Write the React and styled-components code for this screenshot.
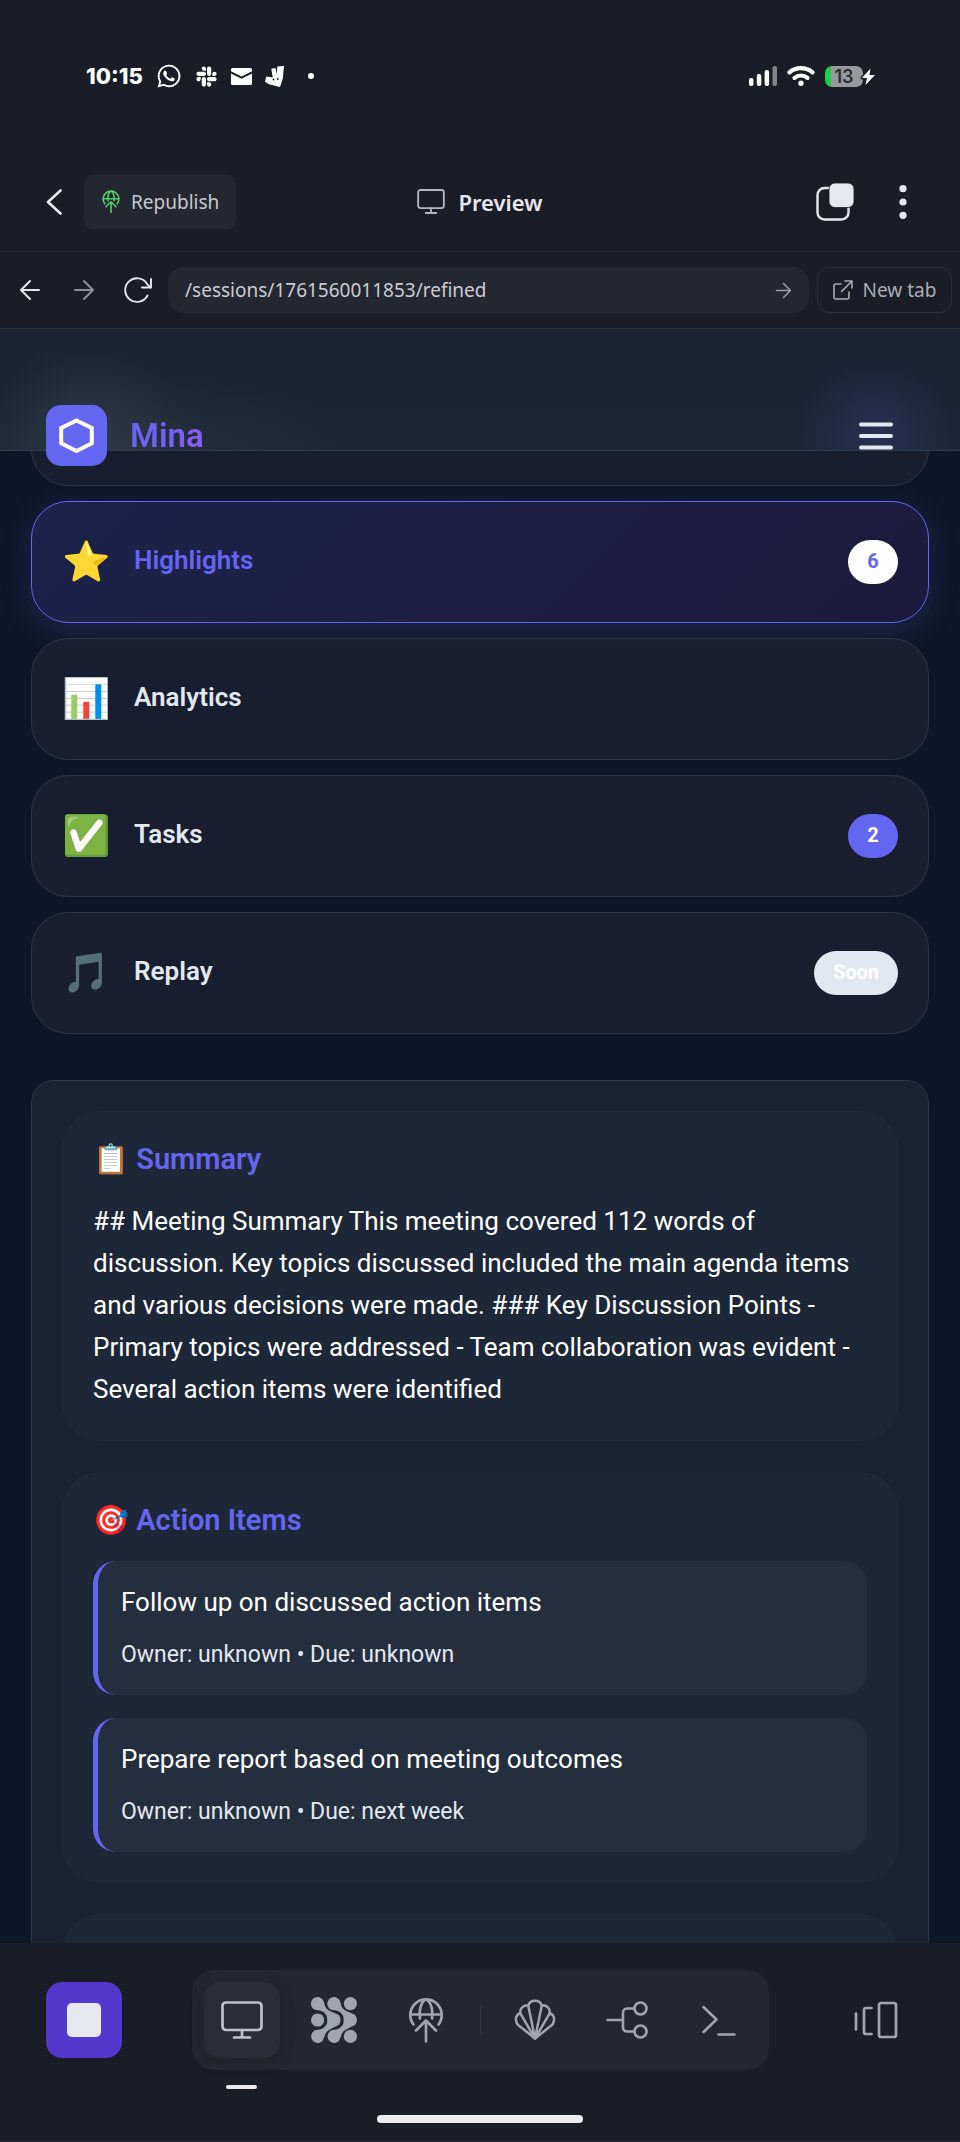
import React from "react";
import styled, { createGlobalStyle, css } from "styled-components";
import { FaWhatsapp, FaSlack } from "react-icons/fa";

const GlobalStyle = createGlobalStyle`
  * { box-sizing: border-box; }
  body {
    margin: 0;
    background: #1a1d25;
    color: #e6e8ee;
    font-family: "Roboto", "Liberation Sans", sans-serif;
  }
  button {
    margin: 0;
    padding: 0;
    border: 0;
    background: none;
    color: inherit;
    font: inherit;
    cursor: pointer;
  }
  svg { display: block; flex: none; }
`;

const chromeFont = `"Noto Sans", "Open Sans", sans-serif`;

const Screen = styled.div`
  display: flex;
  flex-direction: column;
  height: 100vh;
  overflow: hidden;
`;

/* Phone status bar */
const StatusBar = styled.div`
  display: flex;
  flex: none;
  align-items: center;
  justify-content: space-between;
  height: 152px;
  padding: 0 97px 0 86px;
`;

const StatusGroup = styled.div`
  display: flex;
  align-items: center;
  gap: ${(p) => p.$gap}px;
`;

const Clock = styled.time`
  font: 800 22px/28px "Inter", sans-serif;
  color: #fff;
`;

const Battery = styled.div`
  position: relative;
  display: flex;
  align-items: center;
  justify-content: center;
  width: 38px;
  height: 21px;
  border-radius: 7px;
  background: linear-gradient(90deg, #1bd14b 6px, #98989d 6px);
  color: #2b2d32;
  font: 600 18px/21px "Inter", sans-serif;

  svg {
    position: absolute;
    top: 1px;
    right: -13px;
  }
`;

/* Workspace toolbar */
const Toolbar = styled.header`
  display: grid;
  flex: none;
  grid-template-columns: 1fr auto 1fr;
  align-items: center;
  height: 100px;
  padding: 0 46px;
  border-bottom: 1px solid #262938;
  font-family: ${chromeFont};
`;

const ToolbarSide = styled.div`
  display: flex;
  align-items: center;
  gap: ${(p) => (p.$end ? 34 : 22)}px;
  justify-content: ${(p) => (p.$end ? "flex-end" : "flex-start")};
`;

const IconButton = styled.button`
  display: flex;
  align-items: center;
  justify-content: center;
  width: ${(p) => p.$width}px;
  height: 46px;
  color: ${(p) => (p.$dim ? "#8d909c" : "#e6e8ee")};
`;

const RepublishButton = styled.button`
  display: flex;
  align-items: center;
  gap: 11px;
  height: 54px;
  padding: 0 17px 0 18px;
  border-radius: 8px;
  background: #24272f;
  color: #c5c8d0;
  font-size: 19px;
  line-height: 24px;
`;

const GreenIcon = styled.span`
  color: #56cc68;
`;

const PreviewTitle = styled.h1`
  display: flex;
  align-items: center;
  gap: 13px;
  margin: 0;
  font-size: 22px;
  line-height: 28px;
  font-weight: 600;

  svg { color: #b4b7c0; }
`;

const AddressBar = styled.form`
  display: flex;
  flex: none;
  align-items: center;
  height: 77px;
  padding: 0 8px 0 3px;
  border-bottom: 1px solid #2a2c34;
  font-family: ${chromeFont};
`;

const AddressField = styled.label`
  display: flex;
  flex: 1;
  align-items: center;
  height: 46px;
  margin: 0 8px 0 3px;
  padding: 0 17px;
  border-radius: 16px;
  background: #24272f;
  color: #9a9da7;

  input {
    flex: 1;
    min-width: 0;
    padding: 0;
    border: 0;
    outline: 0;
    background: none;
    color: #c9ccd3;
    font: 19px/24px ${chromeFont};
  }
`;

const NewTabButton = styled.button`
  display: flex;
  align-items: center;
  justify-content: center;
  gap: 10px;
  width: 135px;
  height: 46px;
  border: 1px solid #2b2e39;
  border-radius: 12px;
  color: #a9acb5;
  font-size: 19px;
  line-height: 24px;
`;

/* Previewed app */
const Viewport = styled.main`
  flex: 1;
  min-height: 0;
  overflow: hidden;
  background: #0e1729;
`;

const AppHeader = styled.div`
  position: relative;
  z-index: 1;
  display: flex;
  align-items: flex-start;
  justify-content: space-between;
  height: 122px;
  padding: 76px 46px 0;
  border-bottom: 1px solid #303a4b;
  background:
    radial-gradient(circle at 88px 106px, rgba(100, 106, 104, 0.2), transparent 100px),
    radial-gradient(ellipse 200px 90px at 150px 122px, rgba(80, 84, 84, 0.16), transparent),
    radial-gradient(circle at calc(100% - 84px) 106px, rgba(68, 70, 150, 0.3), transparent 80px),
    linear-gradient(180deg, #1a2234, #1d2737);
`;

const Brand = styled.a`
  display: flex;
  align-items: center;
  gap: 23px;
  text-decoration: none;
`;

const BrandMark = styled.span`
  width: 61px;
  height: 61px;
  border-radius: 15px;
  background: #6366f1;
`;

const BrandName = styled.span`
  background: linear-gradient(90deg, #6366f1, #8b5cf6);
  background-clip: text;
  color: transparent;
  font-size: 33px;
  line-height: 40px;
  font-weight: 600;
`;

const MenuButton = styled.button`
  display: flex;
  align-items: center;
  justify-content: center;
  width: 76px;
  height: 61px;
`;

const TabList = styled.nav`
  display: flex;
  flex-direction: column;
  gap: 15px;
  margin: -87px 31px 46px;
`;

const Tab = styled.button`
  display: flex;
  align-items: center;
  gap: 22px;
  height: 122px;
  padding: 0 30px;
  border: 1px solid #2d3647;
  border-radius: 37px;
  background: rgba(27, 31, 49, 0.8);
  color: #e2e8f0;
  text-align: left;

  ${(p) =>
    p.$active &&
    css`
      border-color: #6366f1;
      background: linear-gradient(135deg, #1c2449, #1d1d42 50%, #1d1a3c);
      box-shadow: 0 8px 31px rgba(99, 102, 241, 0.18);
      color: #6366f1;
    `}
`;

const TabIcon = styled.span`
  width: 50px;
  font-size: 39px;
  line-height: 44px;
`;

const TabLabel = styled.span`
  flex: 1;
  padding-bottom: 4px;
  font-size: 26px;
  line-height: 32px;
  font-weight: 600;
`;

const badgeTones = {
  inverse: css`background: #fff; color: #6366f1;`,
  accent: css`background: #6366f1; color: #fff;`,
  muted: css`background: #e2e8f0; color: #fff;`,
};

const Badge = styled.span`
  min-width: 50px;
  padding: 8px 19px 10px;
  border-radius: 22px;
  font-size: 20px;
  line-height: 26px;
  font-weight: 700;
  text-align: center;
  ${(p) => badgeTones[p.$tone]}
`;

const Panel = styled.div`
  display: flex;
  flex-direction: column;
  gap: 31px;
  margin: 0 31px;
  padding: 30px;
  border: 1px solid #2d3647;
  border-radius: 23px;
  background: #1a2133;
  box-shadow: 0 10px 14px rgba(255, 255, 255, 0.03);
`;

const Section = styled.section`
  min-height: 120px;
  padding: 31px;
  border-radius: 37px;
  background: #1e2737;
`;

const SectionTitle = styled.h2`
  margin: 0 0 24px;
  color: #6366f1;
  font-size: 29px;
  line-height: 34px;
  font-weight: 600;
`;

const SummaryText = styled.p`
  margin: 0;
  color: #fff;
  font-size: 26px;
  line-height: 42px;
`;

const ItemList = styled.ul`
  display: flex;
  flex-direction: column;
  gap: 23px;
  margin: 0;
  padding: 0;
  list-style: none;
`;

const Item = styled.li`
  display: flex;
  flex-direction: column;
  gap: 17px;
  padding: 23px;
  border-left: 5px solid #6366f1;
  border-radius: 23px;
  background: #252e3e;
`;

const ItemTitle = styled.div`
  color: #fff;
  font-size: 26px;
  line-height: 36px;
`;

const ItemMeta = styled.div`
  color: #e2e8f0;
  font-size: 23px;
  line-height: 35px;
`;

/* Bottom dock */
const BottomBar = styled.footer`
  display: flex;
  flex: none;
  flex-direction: column;
  align-items: center;
  gap: 45px;
  padding: 27px 46px 18px;
  border-bottom: 1px solid #2c2b38;
`;

const DockRow = styled.div`
  display: flex;
  align-items: center;
  justify-content: space-between;
  width: 100%;
`;

const Dock = styled.div`
  display: flex;
  align-items: center;
  gap: 16px;
  padding: 12px;
  border-radius: 22px;
  background: #24272f;
`;

const DockButton = styled.button`
  position: relative;
  display: flex;
  align-items: center;
  justify-content: center;
  width: 76px;
  height: 76px;
  border-radius: 16px;
  color: #a0a5af;

  ${(p) =>
    p.$active &&
    css`
      background: #2b2c38;
      box-shadow: 0 4px 16px rgba(0, 0, 0, 0.15);
      color: #c0c2ca;

      &::after {
        content: "";
        position: absolute;
        bottom: -31px;
        width: 31px;
        height: 4px;
        border-radius: 2px;
        background: #e8e8ee;
      }
    `}

  ${(p) => p.$primary && css`background: #5338cd;`}
`;

const StopGlyph = styled.span`
  width: 34px;
  height: 34px;
  border-radius: 5px;
  background: #e6e8ee;
`;

const Divider = styled.span`
  width: 1px;
  height: 30px;
  background: #363945;
`;

const HomeIndicator = styled.div`
  width: 206px;
  height: 8px;
  border-radius: 4px;
  background: #ececec;
`;

const Line = ({ w, h, sw = 2, children, box }) => (
  <svg
    width={w}
    height={h}
    viewBox={box || `0 0 ${w} ${h}`}
    fill="none"
    stroke="currentColor"
    strokeWidth={sw}
    strokeLinecap="round"
    strokeLinejoin="round"
    aria-hidden="true"
  >
    {children}
  </svg>
);

const Monitor = ({ w, h, sw }) => (
  <Line w={w} h={h} sw={sw} box="0 0 42 38">
    <rect x="1.5" y="1.5" width="39" height="27.5" rx="3.5" />
    <path d="M21 29v7.5M13 36.5h16" />
  </Line>
);

const GlobeUp = ({ w, h, sw }) => (
  <Line w={w} h={h} sw={sw} box="0 0 36 46">
    <path d="M5.5 27.5a15.7 15.7 0 1 1 25 0" />
    <path d="M2.3 17.5h31.4" />
    <path d="M12 21.5C11 13 13 6 17 2.5M24 21.5C25 13 23 6 19 2.5" />
    <path d="M18 44.500V23.500M8 33.500l10-10 10 10" />
  </Line>
);

const ArrowRight = ({ size }) => (
  <Line w={size} h={size} box="0 0 22 22">
    <path d="M2 11h18M11 2l9 9-9 9" />
  </Line>
);

const ArrowLeft = () => (
  <Line w={22} h={22} sw={2}>
    <path d="M20 11H2M11 2l-9 9 9 9" />
  </Line>
);

const Mail = () => (
  <svg width="21" height="17" fill="#fff" aria-hidden="true">
    <path d="M1.500 0h18a1.500 1.500 0 0 1 1.500 1.500v1.700L10.500 8.500 0 3.200V1.500A1.500 1.500 0 0 1 1.500 0z" />
    <path d="M0 5.400l10.500 5.300L21 5.400V15.500A1.500 1.500 0 0 1 19.500 17h-18A1.500 1.500 0 0 1 0 15.500z" />
  </svg>
);

const Delivery = () => (
  <svg width="19" height="21" aria-hidden="true">
    <path
      fill="#fff"
      d="M12.300.6l6.700-.6-1.200 12.600-2.800 8.400L4 18.200l-4-2.400 1.200-5.200 6.500 1L6.300 2.800l4.200-.900 1.400 6.400z"
    />
    <circle cx="8.500" cy="13.500" r=".9" fill="#1a1d25" />
    <circle cx="12.800" cy="13" r=".9" fill="#1a1d25" />
  </svg>
);

const Signal = () => (
  <svg width="28" height="20" fill="#fff" aria-hidden="true">
    <rect x="0" y="12" width="4.500" height="8" rx="2" />
    <rect x="7.800" y="8" width="4.500" height="12" rx="2" />
    <rect x="15.600" y="4" width="4.500" height="16" rx="2" />
    <rect x="23.500" y="0" width="4.500" height="20" rx="2" fill="#85868b" />
  </svg>
);

const Wifi = () => (
  <Line w={28} h={20} sw={4.2}>
    <g stroke="#fff">
      <path d="M2.500 6.300C9 .8 19 .8 25.500 6.300" />
      <path d="M7.500 11.800c3.800-3.100 9.200-3.100 13 0" />
    </g>
    <circle cx="14" cy="17.200" r="2.700" fill="#fff" stroke="none" />
  </Line>
);

const Bolt = () => (
  <svg width="16" height="19" aria-hidden="true">
    <path
      d="M10.500 1.500L2 11h5l-1.500 7L15 8H9.500z"
      fill="#fff"
      stroke="#1a1d25"
      strokeWidth="3"
      paintOrder="stroke"
      strokeLinejoin="round"
    />
  </svg>
);

const Molecules = () => (
  <svg width="46" height="46" fill="currentColor" aria-hidden="true">
    <path
      d="M11.200 2C13.800 5 13 8.500 15.500 11.500C18 14.500 22 15 24.500 16.600A6.600 6.600 0 0 1 24.500 29.400C22 31 18.500 32 16 34.500C13.300 37.200 13.800 41 11.200 44.200A6.600 6.600 0 1 1 6.600 32.700C10 32.500 12.500 31.500 14.500 29C17 26 16.800 20 14.500 17C12.500 14.500 10 13.500 6.600 13.300A6.600 6.600 0 1 1 11.200 2z"
    />
    <path
      d="M27.600 2C30.200 5 29.400 8.500 31.900 11.500C34.400 14.500 38.400 15 40.900 16.600A6.600 6.600 0 0 1 40.900 29.400C38.400 31 34.900 32 32.400 34.500C29.700 37.200 30.200 41 27.600 44.200A6.600 6.600 0 1 1 23 32.700C26.400 32.500 28.900 31.500 30.900 29C33.400 26 33.200 20 30.900 17C28.900 14.500 26.400 13.500 23 13.300A6.600 6.600 0 1 1 27.600 2z"
    />
    <circle cx="6.600" cy="23" r="6.600" />
    <circle cx="39.400" cy="6.600" r="6.600" />
    <circle cx="39.400" cy="39.400" r="6.600" />
  </svg>
);

const Shell = () => (
  <Line w={42} h={42} sw={2.5}>
    <path d="M21 39.500L3.500 25.500C.5 20.500 2 15.500 6.200 14.200C5.800 9 9.500 6 14.200 6.200C16.500.3 25.500.3 27.800 6.200C32.500 6 36.200 9 35.800 14.200C40 15.500 41.500 20.500 38.500 25.500Z" />
    <path d="M6.200 14.200L21 39.500L14.200 6.200M27.800 6.200L21 39.500L35.800 14.200" />
    <path d="M16.500 35h9L21 39.500z" fill="currentColor" />
  </Line>
);

const Branch = () => (
  <Line w={42} h={38} sw={2.6}>
    <path d="M1.500 19H17M28 7.500h-7a4 4 0 0 0-4 4v15a4 4 0 0 0 4 4h7" />
    <circle cx="34.500" cy="7.500" r="6" />
    <circle cx="34.500" cy="30.500" r="6" />
  </Line>
);

const Prompt = () => (
  <Line w={34} h={32} sw={2.5}>
    <path d="M1.500 3l13 12.500-13 12.500M16.500 30.500h16" />
  </Line>
);

const Carousel = () => (
  <Line w={44} h={38} sw={2.7}>
    <path d="M2 12.500v16M17.500 7H12a2 2 0 0 0-2 2v22a2 2 0 0 0 2 2h5.500" />
    <rect x="25" y="2" width="17" height="34" rx="2" />
  </Line>
);

const tabs = [
  { id: "first", covered: true },
  { id: "highlights", icon: "⭐", label: "Highlights", badge: "6", tone: "inverse", active: true },
  { id: "analytics", icon: "📊", label: "Analytics" },
  { id: "tasks", icon: "✅", label: "Tasks", badge: "2", tone: "accent" },
  { id: "replay", icon: "🎵", label: "Replay", badge: "Soon", tone: "muted" },
];

const actionItems = [
  { title: "Follow up on discussed action items", owner: "unknown", due: "unknown" },
  { title: "Prepare report based on meeting outcomes", owner: "unknown", due: "next week" },
];

export default function App() {
  return (
    <>
      <GlobalStyle />
      <Screen>
        <StatusBar>
          <StatusGroup $gap={13}>
            <Clock>10:15</Clock>
            <FaWhatsapp size={26} color="#fff" />
            <FaSlack size={23} color="#fff" />
            <Mail />
            <Delivery />
            <svg width="24" height="6" aria-hidden="true">
              <circle cx="14" cy="3" r="3" fill="#fff" />
            </svg>
          </StatusGroup>
          <StatusGroup $gap={10}>
            <Signal />
            <Wifi />
            <Battery>
              13
              <Bolt />
            </Battery>
          </StatusGroup>
        </StatusBar>

        <Toolbar>
          <ToolbarSide>
            <IconButton $width={16} aria-label="Back">
              <Line w={16} h={26} sw={2.6}>
                <path d="M14.500 1.500L2 13l12.500 11.500" />
              </Line>
            </IconButton>
            <RepublishButton>
              <GreenIcon>
                <GlobeUp w={18} h={23} sw={3.2} />
              </GreenIcon>
              Republish
            </RepublishButton>
          </ToolbarSide>
          <PreviewTitle>
            <Monitor w={28} h={25} sw={2.8} />
            Preview
          </PreviewTitle>
          <ToolbarSide $end>
            <IconButton $width={46} aria-label="Windows">
              <svg width="38" height="38" aria-hidden="true">
                <rect x="1.500" y="5" width="31" height="31.500" rx="7" fill="none" stroke="#e6e8ee" strokeWidth="2.400" />
                <rect x="13" y="0" width="25" height="24.500" rx="6" fill="#e6e8ee" stroke="#1a1d25" strokeWidth=".8" />
              </svg>
            </IconButton>
            <IconButton $width={22} aria-label="More">
              <svg width="8" height="34" fill="#e6e8ee" aria-hidden="true">
                <circle cx="4" cy="3.700" r="3.600" />
                <circle cx="4" cy="17" r="3.600" />
                <circle cx="4" cy="30.300" r="3.600" />
              </svg>
            </IconButton>
          </ToolbarSide>
        </Toolbar>

        <AddressBar onSubmit={(e) => e.preventDefault()}>
          <IconButton type="button" $width={54} aria-label="Go back">
            <ArrowLeft />
          </IconButton>
          <IconButton type="button" $width={54} $dim aria-label="Go forward">
            <ArrowRight size={22} />
          </IconButton>
          <IconButton type="button" $width={54} aria-label="Reload">
            <Line w={30} h={26} sw={1.9}>
              <path d="M24.500 18.500A11.800 11.800 0 1 1 24 6.800l3.500 3.700" />
              <path d="M28 2v8.500h-9" />
            </Line>
          </IconButton>
          <AddressField>
            <input aria-label="Address" defaultValue="/sessions/1761560011853/refined" />
            <ArrowRight size={17} />
          </AddressField>
          <NewTabButton type="button">
            <Line w={20} h={20} sw={1.6}>
              <path d="M8 4H3a2 2 0 0 0-2 2v11a2 2 0 0 0 2 2h11a2 2 0 0 0 2-2v-5M12 1h7v7M19 1L8.500 11.500" />
            </Line>
            New tab
          </NewTabButton>
        </AddressBar>

        <Viewport>
          <AppHeader>
            <Brand href="#home">
              <BrandMark>
                <svg width="61" height="61" aria-hidden="true">
                  <path
                    d="M30.500 15.500L45.800 23v15.300L30.500 46 15.200 38.300V23z"
                    fill="none"
                    stroke="#fff"
                    strokeWidth="4"
                  />
                </svg>
              </BrandMark>
              <BrandName>Mina</BrandName>
            </Brand>
            <MenuButton aria-label="Menu">
              <svg width="34" height="28" fill="#e2e8f0" aria-hidden="true">
                <rect y="0.500" width="34" height="4" rx="2" />
                <rect y="12" width="34" height="4" rx="2" />
                <rect y="23.500" width="34" height="4" rx="2" />
              </svg>
            </MenuButton>
          </AppHeader>

          <TabList>
            {tabs.map((t) => (
              <Tab key={t.id} $active={t.active}>
                {!t.covered && (
                  <>
                    <TabIcon>{t.icon}</TabIcon>
                    <TabLabel>{t.label}</TabLabel>
                    {t.badge && <Badge $tone={t.tone}>{t.badge}</Badge>}
                  </>
                )}
              </Tab>
            ))}
          </TabList>

          <Panel>
            <Section>
              <SectionTitle>📋 Summary</SectionTitle>
              <SummaryText>
                ## Meeting Summary This meeting covered 112 words of discussion. Key topics discussed
                included the main agenda items and various decisions were made. ### Key Discussion
                Points - Primary topics were addressed - Team collaboration was evident - Several
                action items were identified
              </SummaryText>
            </Section>
            <Section>
              <SectionTitle>🎯 Action Items</SectionTitle>
              <ItemList>
                {actionItems.map((a) => (
                  <Item key={a.title}>
                    <ItemTitle>{a.title}</ItemTitle>
                    <ItemMeta>
                      Owner: {a.owner} • Due: {a.due}
                    </ItemMeta>
                  </Item>
                ))}
              </ItemList>
            </Section>
            <Section />
          </Panel>
        </Viewport>

        <BottomBar>
          <DockRow>
            <DockButton $primary aria-label="Stop">
              <StopGlyph />
            </DockButton>
            <Dock>
              <DockButton $active aria-label="Preview">
                <Monitor w={42} h={38} sw={2.7} />
              </DockButton>
              <DockButton aria-label="Agent">
                <Molecules />
              </DockButton>
              <DockButton aria-label="Publish">
                <GlobeUp w={36} h={46} sw={2.7} />
              </DockButton>
              <Divider />
              <DockButton aria-label="Storage">
                <Shell />
              </DockButton>
              <DockButton aria-label="Workflows">
                <Branch />
              </DockButton>
              <DockButton aria-label="Shell">
                <Prompt />
              </DockButton>
            </Dock>
            <DockButton aria-label="Switch panel">
              <Carousel />
            </DockButton>
          </DockRow>
          <HomeIndicator />
        </BottomBar>
      </Screen>
    </>
  );
}
